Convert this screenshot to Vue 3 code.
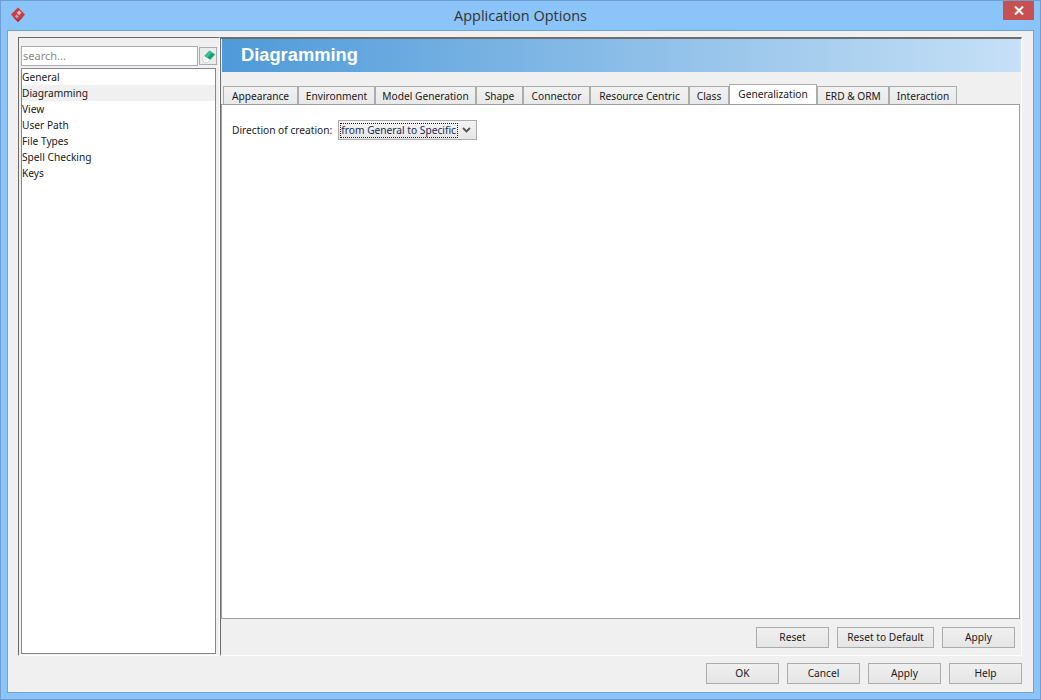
<template>
  <div class="window">
    <header class="titlebar">
      <svg class="app-icon" width="16" height="16" viewBox="0 0 16 16">
        <path d="M8 .5 15 7.5 8 15 1 7.5Z" fill="#d03a3f" />
        <path d="M2.5 9.5 8 15l5.5-5.5L8 13.2Z" fill="#a92a30" />
        <path d="M7.5 4.2h3.2v3.2H7.5Z" fill="#f3c9cb" transform="rotate(45 9 5.8)" />
        <path d="M6.6 7.6 8.6 9.6 7 11.2 5 9.2Z" fill="#8fb9e0" />
      </svg>
      <span class="title">Application Options</span>
      <button class="close">
        <svg width="10" height="9" viewBox="0 0 10 9"><path d="M1 .5 9 8.5M9 .5 1 8.5" stroke="#fff" stroke-width="2" /></svg>
      </button>
    </header>

    <div class="client">
      <main class="split">
        <aside class="left-pane">
          <div class="search-row">
            <input class="search" type="text" placeholder="search..." />
            <button class="clear-btn">
              <svg width="15" height="15" viewBox="0 0 15 15">
                <path d="M1 9 8.5 1.5 14 5.5 6.5 13.5 3 13.5Z" fill="#fbfbfb" stroke="#c8c8c8" stroke-width=".7" />
                <path d="M3.6 7 8.5 1.8 14 5.5 9.2 10.8Z" fill="#17a06f" />
                <path d="M8.5 1.8 11.2 3.6 6.4 8.8 3.6 7Z" fill="#35c096" />
              </svg>
            </button>
          </div>
          <ul class="tree">
            <li v-for="item in categories" :key="item" :class="{ selected: item === 'Diagramming' }">{{ item }}</li>
          </ul>
        </aside>

        <section class="right-pane">
          <h1 class="banner">Diagramming</h1>
          <nav class="tabs">
            <div v-for="tab in tabs" :key="tab" class="tab" :class="{ active: tab === 'Generalization' }">{{ tab }}</div>
          </nav>
          <div class="tab-body">
            <label class="field-label">Direction of creation:</label>
            <div class="combo">
              <span class="combo-value">from General to Specific</span>
              <svg width="9" height="6" viewBox="0 0 9 6"><path d="M1 1 4.5 4.5 8 1" fill="none" stroke="#555" stroke-width="1.8" /></svg>
            </div>
          </div>
          <div class="page-buttons">
            <button class="btn">Reset</button>
            <button class="btn wide">Reset to Default</button>
            <button class="btn">Apply</button>
          </div>
        </section>
      </main>

      <footer class="dialog-buttons">
        <button class="btn">OK</button>
        <button class="btn">Cancel</button>
        <button class="btn">Apply</button>
        <button class="btn">Help</button>
      </footer>
    </div>
  </div>
</template>

<script setup>
const categories = ['General', 'Diagramming', 'View', 'User Path', 'File Types', 'Spell Checking', 'Keys'];
const tabs = ['Appearance', 'Environment', 'Model Generation', 'Shape', 'Connector', 'Resource Centric', 'Class', 'Generalization', 'ERD & ORM', 'Interaction'];
</script>

<style>
html, body { margin: 0; overflow: hidden; }
</style>

<style scoped>
.window {
  box-sizing: border-box; width: 1041px; height: 700px;
  display: flex; flex-direction: column;
  background: #8ac4f9; border: 1px solid #6f9fce;
  font-family: "Noto Sans", "Liberation Sans", sans-serif; font-size: 10.2px; color: #1a1a1a;
}

.titlebar { position: relative; height: 29px; flex: none; display: flex; align-items: center; justify-content: center; }
.app-icon { position: absolute; left: 9px; top: 6px; }
.title { font-family: "Open Sans", "Liberation Sans", sans-serif; font-size: 14.5px; color: #333; }
.close {
  position: absolute; right: 6px; top: 0; width: 31px; height: 19px; padding: 0;
  display: flex; align-items: center; justify-content: center;
  background: #c75050; border: none;
}

.client {
  flex: 1; min-height: 0; margin: 0 6px 6px;
  display: flex; flex-direction: column;
  background: #f0f0f0; border: 1px solid #6fa3d6;
}

.split { flex: 1; min-height: 0; display: flex; margin: 6px 11px 0 10px; }

.left-pane {
  box-sizing: border-box; width: 202px; flex: none;
  display: flex; flex-direction: column; padding: 8px 2px 1px;
  border-left: 1px solid #6b6b6b; border-top: 1px solid #6b6b6b;
  border-right: 1px solid #fff; border-bottom: 1px solid #fff;
}

.search-row { display: flex; align-items: center; gap: 1px; height: 20px; margin-bottom: 2px; }
.search {
  box-sizing: border-box; width: 177px; height: 20px; padding: 0 1px 2px; margin: 0;
  background: #fff; border: 1px solid #ababab; outline: none;
  font: inherit; font-size: 11px;
}
.search::placeholder { color: #8a8a8a; opacity: 1; }
.clear-btn {
  box-sizing: border-box; width: 18px; height: 18px; padding: 0;
  display: flex; align-items: center; justify-content: center;
  background: #ececec; border: 1px solid #adadad;
}

.tree {
  box-sizing: border-box; width: 195px; flex: 1; margin: 0; padding: 0; list-style: none;
  background: #fff; border: 1px solid #828790;
}
.tree li { height: 16px; line-height: 16px; white-space: nowrap; }
.tree li.selected { background: #f0f0f0; }

.right-pane {
  box-sizing: border-box; flex: 1; min-width: 0;
  display: flex; flex-direction: column;
  border-left: 1px solid #6b6b6b; border-top: 2px solid #6e6e6e;
  border-right: 1px solid #fff; border-bottom: 1px solid #fff;
}

.banner {
  height: 33px; line-height: 32px; margin: 0 0 0 1px; padding-left: 19px; flex: none;
  font-family: "Liberation Sans", Arial, sans-serif;
  font-size: 18.3px; font-weight: 700; color: #fff;
  background: linear-gradient(to right, #4f9ad9, #c6e0f6);
}

.tabs {
  height: 20px; margin: 12px 0 0 2px; flex: none;
  display: grid; align-items: end;
  grid-template-columns: 75px 77px 101px 47px 67px 99px 40px 88px 72px 68px;
  justify-content: start;
}
.tab {
  box-sizing: border-box; height: 18px; line-height: 18px; text-align: center; white-space: nowrap;
  background: linear-gradient(#f2f2f2, #e8e8e8);
  border: 1px solid #acacac; border-bottom: none;
}
.tab.active { position: relative; z-index: 1; height: 20px; line-height: 18px; background: #fff; }

.tab-body {
  box-sizing: border-box; height: 515px; margin-right: 1px; flex: none;
  display: flex; align-items: flex-start; gap: 6px; padding: 15px 0 0 10px;
  background: #fff; border: 1px solid #a0a0a0;
}
.field-label { line-height: 20px; }
.combo {
  box-sizing: border-box; width: 139px; height: 20px; padding: 2px 5px 2px 2px;
  display: flex; align-items: center; justify-content: space-between;
  background: linear-gradient(#f4f4f4, #e6e6e6); border: 1px solid #acacac;
}
.combo-value { width: 116px; line-height: 13px; outline: 1px dotted #222; white-space: nowrap; overflow: hidden; color: #1b2a55; }

.page-buttons { display: flex; justify-content: flex-end; gap: 8px; padding: 8px 6px 0 0; }
.dialog-buttons { display: flex; justify-content: flex-end; gap: 8px; flex: none; padding: 7px 11px 8px 0; }

.btn {
  box-sizing: border-box; width: 73px; height: 21px; padding: 0 0 1px; margin: 0;
  font: inherit; color: #1a1a1a;
  background: linear-gradient(#f0f0f0, #e5e5e5); border: 1px solid #acacac;
}
.btn.wide { width: 97px; }
</style>
